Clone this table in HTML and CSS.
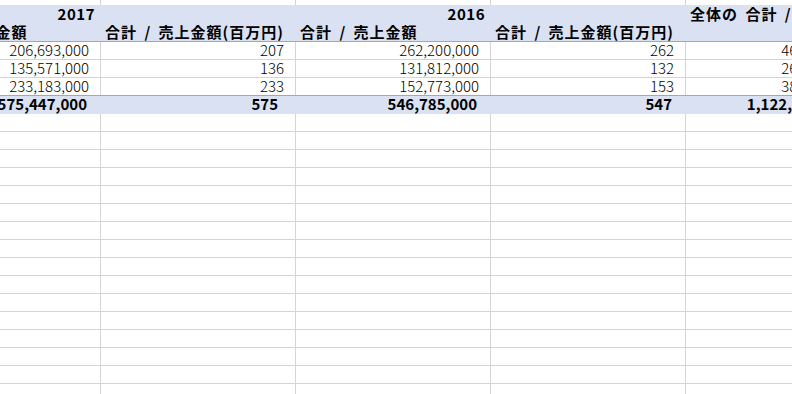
FILE: index.html
```html
<!DOCTYPE html>
<html lang="ja">
<head>
<meta charset="utf-8">
<title>Pivot</title>
<link rel="stylesheet" href="styles.css">
</head>
<body>
<div class="sheet">
  <div class="row r-top">
    <div class="c c0"></div><div class="c c1"></div><div class="c c2"></div><div class="c c3"></div><div class="c c4"></div>
  </div>
  <div class="head">
    <div class="hrow h1">
      <div class="c c0 num">2017</div><div class="c c1"></div><div class="c c2 num">2016</div><div class="c c3"></div><div class="c c4 label">全体の 合計 / 売上金額</div>
    </div>
    <div class="hrow h2">
      <div class="c c0 label">合計 / 売上金額</div><div class="c c1 label">合計 / 売上金額(百万円)</div><div class="c c2 label">合計 / 売上金額</div><div class="c c3 label">合計 / 売上金額(百万円)</div><div class="c c4"></div>
    </div>
  </div>
  <div class="row data">
    <div class="c c0 num">206,693,000</div><div class="c c1 num">207</div><div class="c c2 num">262,200,000</div><div class="c c3 num">262</div><div class="c c4 num">468,893,000</div>
  </div>
  <div class="row data">
    <div class="c c0 num">135,571,000</div><div class="c c1 num">136</div><div class="c c2 num">131,812,000</div><div class="c c3 num">132</div><div class="c c4 num">267,383,000</div>
  </div>
  <div class="row data last">
    <div class="c c0 num">233,183,000</div><div class="c c1 num">233</div><div class="c c2 num">152,773,000</div><div class="c c3 num">153</div><div class="c c4 num">385,956,000</div>
  </div>
  <div class="row total">
    <div class="c c0 num">575,447,000</div><div class="c c1 num small">575</div><div class="c c2 num">546,785,000</div><div class="c c3 num">547</div><div class="c c4 num grand">1,122,232,000</div>
  </div>
  <div class="row empty"><div class="c c0"></div><div class="c c1"></div><div class="c c2"></div><div class="c c3"></div><div class="c c4"></div></div>
  <div class="row empty"><div class="c c0"></div><div class="c c1"></div><div class="c c2"></div><div class="c c3"></div><div class="c c4"></div></div>
  <div class="row empty"><div class="c c0"></div><div class="c c1"></div><div class="c c2"></div><div class="c c3"></div><div class="c c4"></div></div>
  <div class="row empty"><div class="c c0"></div><div class="c c1"></div><div class="c c2"></div><div class="c c3"></div><div class="c c4"></div></div>
  <div class="row empty"><div class="c c0"></div><div class="c c1"></div><div class="c c2"></div><div class="c c3"></div><div class="c c4"></div></div>
  <div class="row empty"><div class="c c0"></div><div class="c c1"></div><div class="c c2"></div><div class="c c3"></div><div class="c c4"></div></div>
  <div class="row empty"><div class="c c0"></div><div class="c c1"></div><div class="c c2"></div><div class="c c3"></div><div class="c c4"></div></div>
  <div class="row empty"><div class="c c0"></div><div class="c c1"></div><div class="c c2"></div><div class="c c3"></div><div class="c c4"></div></div>
  <div class="row empty"><div class="c c0"></div><div class="c c1"></div><div class="c c2"></div><div class="c c3"></div><div class="c c4"></div></div>
  <div class="row empty"><div class="c c0"></div><div class="c c1"></div><div class="c c2"></div><div class="c c3"></div><div class="c c4"></div></div>
  <div class="row empty"><div class="c c0"></div><div class="c c1"></div><div class="c c2"></div><div class="c c3"></div><div class="c c4"></div></div>
  <div class="row empty"><div class="c c0"></div><div class="c c1"></div><div class="c c2"></div><div class="c c3"></div><div class="c c4"></div></div>
  <div class="row empty"><div class="c c0"></div><div class="c c1"></div><div class="c c2"></div><div class="c c3"></div><div class="c c4"></div></div>
  <div class="row empty"><div class="c c0"></div><div class="c c1"></div><div class="c c2"></div><div class="c c3"></div><div class="c c4"></div></div>
  <div class="row empty"><div class="c c0"></div><div class="c c1"></div><div class="c c2"></div><div class="c c3"></div><div class="c c4"></div></div>
  <div class="row empty"><div class="c c0"></div><div class="c c1"></div><div class="c c2"></div><div class="c c3"></div><div class="c c4"></div></div>
</div>
</body>
</html>
```
FILE: styles.css
```css
* { box-sizing: border-box; }
html, body { margin: 0; padding: 0; background: #fff; overflow: hidden; }
body {
  font-family: "Noto Sans CJK JP", "Noto Sans", sans-serif;
  font-size: 15px;
  color: #000;
  width: 792px;
  height: 394px;
}
.sheet {
  margin-left: -94px;
  width: 1000px;
  display: flex;
  flex-direction: column;
}
.row, .hrow { display: flex; flex: none; }
.c {
  flex: none;
  white-space: nowrap;
  overflow: visible;
  border-right: 1px solid #d4d4d4;
  padding: 0 4px;
}
.c0, .c1, .c2, .c3 { width: 195px; }
.c4 { width: 187px; }
.num { text-align: right; padding-right: 11px; }
.label { word-spacing: 3px; letter-spacing: 1px; }

.r-top { height: 5px; }

.head {
  background: #d9e1f2;
  border-bottom: 1px solid #8ea9db;
  font-weight: bold;
}
.head .c { border-right-color: transparent; }
.hrow { height: 18px; }
.h1 .c { line-height: 18px; }
.h1 .num { padding-right: 5px; letter-spacing: 0.5px; }
.h2 .c { line-height: 17px; }

.data { height: 18px; border-bottom: 1px solid #d4d4d4; }
.data .c { line-height: 15px; font-weight: 300; }
.data.last { border-bottom-color: #8ea9db; }

.total {
  height: 18px;
  background: #d9e1f2;
  font-weight: bold;
}
.total .c { border-right-color: transparent; line-height: 15px; }
.total .num { padding-right: 13px; }
.total .small { padding-right: 17px; }
.total .grand { padding-right: 22px; }

.empty { height: 18px; border-bottom: 1px solid #d4d4d4; }
```
